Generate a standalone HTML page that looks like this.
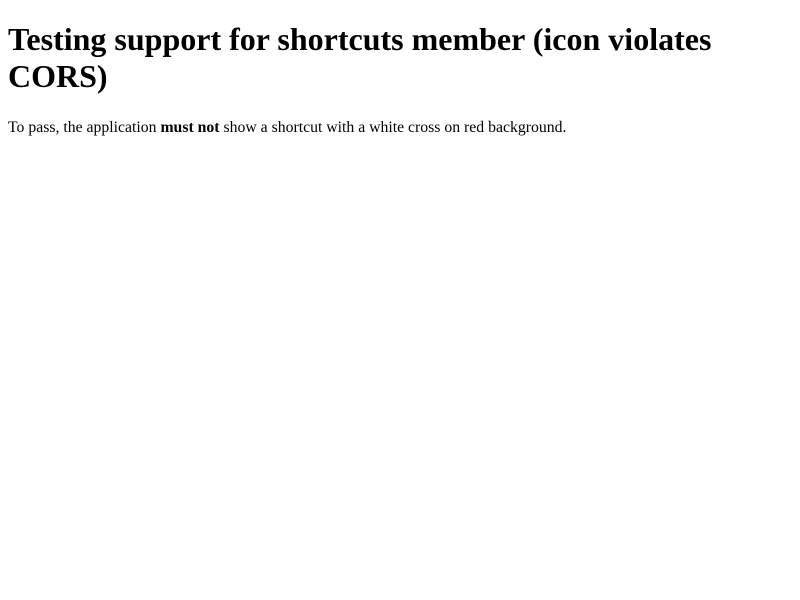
<!DOCTYPE html>
<html><head><meta charset="utf-8"><style>
body{margin:8px;font-family:"Liberation Serif",serif;background:#fff;color:#000}
h1{font-size:32px;margin:21px 0;line-height:37px}
p{font-size:15.75px;margin:24px 0 16px}
</style></head><body>
<h1>Testing support for shortcuts member (icon violates CORS)</h1>
<p>To pass, the application <strong>must not</strong> show a shortcut with a white cross on red background.</p>
</body></html>
